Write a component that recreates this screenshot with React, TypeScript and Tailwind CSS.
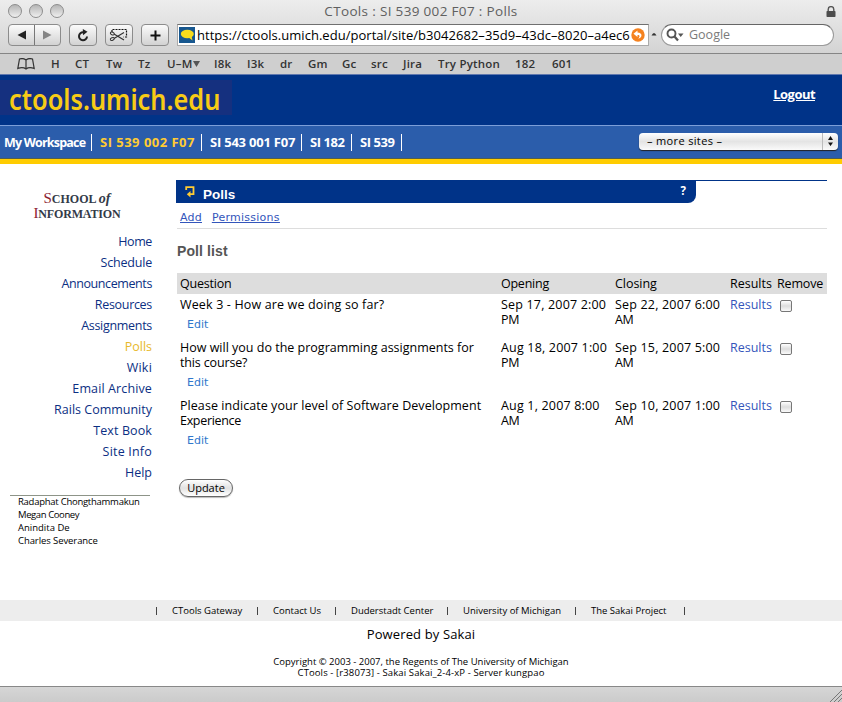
import React from "react";

const marks = [
  { label: "H", w: "w-[24px]" },
  { label: "CT", w: "w-[31px]" },
  { label: "Tw", w: "w-[32px]" },
  { label: "Tz", w: "w-[29px]" },
  { label: "U–M", w: "w-[47px]", menu: true },
  { label: "I8k", w: "w-[33px]" },
  { label: "I3k", w: "w-[33px]" },
  { label: "dr", w: "w-[28px]" },
  { label: "Gm", w: "w-[34px]" },
  { label: "Gc", w: "w-[29px]" },
  { label: "src", w: "w-[32px]" },
  { label: "Jira", w: "w-[35px]" },
  { label: "Try Python", w: "w-[77px]" },
  { label: "182", w: "w-[37px]" },
  { label: "601", w: "w-[30px]" },
];

const sites = [
  { label: "My Workspace", style: "w-[92px] pl-[4px] text-[12.500px] tracking-[-0.800px]" },
  { label: "SI 539 002 F07", style: "w-[110px] pl-[8px] tracking-[0.480px] text-[#fc3]" },
  { label: "SI 543 001 F07", style: "w-[100px] pl-[8px] tracking-[-0.220px]" },
  { label: "SI 182", style: "w-[50px] pl-[8px] tracking-[-0.450px]" },
  { label: "SI 539", style: "w-[50px] pl-[8px] tracking-[-0.450px]" },
];

const tools = [
  { label: "Home", style: "tracking-[-0.400px]" },
  { label: "Schedule", style: "tracking-[-0.200px]" },
  { label: "Announcements", style: "tracking-[-0.400px]" },
  { label: "Resources", style: "tracking-[-0.300px]" },
  { label: "Assignments", style: "tracking-[-0.300px]" },
  { label: "Polls", style: "text-[#e8b92c]" },
  { label: "Wiki", style: "tracking-[0.200px]" },
  { label: "Email Archive", style: "tracking-[0.120px]" },
  { label: "Rails Community", style: "" },
  { label: "Text Book", style: "tracking-[0.100px]" },
  { label: "Site Info", style: "tracking-[0.200px]" },
  { label: "Help", style: "" },
];

const people = [
  { label: "Radaphat Chongthammakun", style: "tracking-[-0.260px]" },
  { label: "Megan Cooney", style: "tracking-[-0.400px]" },
  { label: "Anindita De", style: "" },
  { label: "Charles Severance", style: "tracking-[-0.080px]" },
];

const headings = [
  { label: "Question", style: "tracking-[-0.200px]" },
  { label: "Opening", style: "tracking-[-0.250px]" },
  { label: "Closing", style: "tracking-[-0.050px]" },
  { label: "Results", style: "" },
  { label: "Remove", style: "tracking-[-0.150px]" },
];

type Line = { text: string; style: string };
const date = "tracking-[0.180px]";
const meridiem = "tracking-[-0.300px]";

const polls: { question: Line[]; opening: Line[]; closing: Line[] }[] = [
  {
    question: [{ text: "Week 3 - How are we doing so far?", style: "tracking-[0.150px]" }],
    opening: [{ text: "Sep 17, 2007 2:00", style: date }, { text: "PM", style: meridiem }],
    closing: [{ text: "Sep 22, 2007 6:00", style: date }, { text: "AM", style: meridiem }],
  },
  {
    question: [
      { text: "How will you do the programming assignments for", style: "" },
      { text: "this course?", style: "tracking-[-0.150px]" },
    ],
    opening: [{ text: "Aug 18, 2007 1:00", style: date }, { text: "PM", style: meridiem }],
    closing: [{ text: "Sep 15, 2007 5:00", style: date }, { text: "AM", style: meridiem }],
  },
  {
    question: [
      { text: "Please indicate your level of Software Development", style: "tracking-[0.060px]" },
      { text: "Experience", style: "tracking-[-0.320px]" },
    ],
    opening: [{ text: "Aug 1, 2007 8:00", style: date }, { text: "AM", style: meridiem }],
    closing: [{ text: "Sep 10, 2007 1:00", style: date }, { text: "AM", style: meridiem }],
  },
];

const footerLinks = [
  { label: "CTools Gateway", w: "w-[101px]" },
  { label: "Contact Us", w: "w-[78px]" },
  { label: "Duderstadt Center", w: "w-[112px]" },
  { label: "University of Michigan", w: "w-[128px]" },
  { label: "The Sakai Project", w: "w-[109px]" },
];

const btn =
  "flex h-[22px] items-center justify-center rounded-[4px] border border-[#8c8c8c] bg-linear-to-b from-[#fbfbfb] to-[#d2d2d2]";
const columns = "grid grid-cols-[321px_114px_115px_47px_53px]";

function Lines({ lines }: { lines: Line[] }) {
  return (
    <div className="pl-[3px]">
      {lines.map((line) => (
        <div key={line.text} className={`whitespace-nowrap ${line.style}`}>{line.text}</div>
      ))}
    </div>
  );
}

function BrowserChrome() {
  return (
    <div className="h-[75px] bg-linear-to-b from-[#ededed] to-[#c9c9c9] font-['Open_Sans',sans-serif]">
      <div className="grid h-[24px] grid-cols-[80px_1fr_80px] items-start">
        <div className="flex gap-[7px] pt-[4px] pl-[8px]">
          {[0, 1, 2].map((i) => (
            <span key={i} className="size-[14px] rounded-full border border-[#8d8d8d] bg-linear-to-b from-[#b5b5b5] to-[#efefef]" />
          ))}
        </div>
        <div className="text-center text-[13.500px] leading-[23px] tracking-[0.330px] text-[#606060]">CTools : SI 539 002 F07 : Polls</div>
        <svg className="mt-[6px] mr-[6px] justify-self-end" width="10" height="12" viewBox="0 0 10 12">
          <path d="M2.2 6V3.4a2.8 2.8 0 0 1 5.6 0V6" fill="none" stroke="#555" strokeWidth="1.4" />
          <rect x="0.5" y="5" width="9" height="6" rx="0.8" fill="#4c4c4c" />
        </svg>
      </div>
      <div className="flex h-[29px] items-start pl-[8px]">
        <div className={`${btn} w-[53px]`}>
          <div className="flex h-full w-[26px] items-center justify-center border-r border-[#777]">
            <svg width="9" height="10" viewBox="0 0 9 10"><path d="M9 0.5v9L0.5 5z" fill="#222" /></svg>
          </div>
          <div className="flex flex-1 items-center justify-center">
            <svg width="9" height="10" viewBox="0 0 9 10"><path d="M0 0.5v9L8.500 5z" fill="#858585" /></svg>
          </div>
        </div>
        <div className={`${btn} ml-[8px] w-[28px]`}>
          <svg width="12" height="13" viewBox="0 0 12 13">
            <path d="M10 7.500A4 4 0 1 1 6.300 3.300" fill="none" stroke="#222" strokeWidth="2" />
            <path d="M5.800 0L10.500 2.800L6 6.200z" fill="#222" />
          </svg>
        </div>
        <div className={`${btn} ml-[8px] w-[28px]`}>
          <svg width="20" height="14" viewBox="0 0 20 14" fill="none" stroke="#333">
            <path d="M3 4V1.500H17.500V9H14.500" stroke="#111" strokeWidth="1.200" strokeDasharray="2 1" />
            <path d="M5 10.400L15 4.500M5 6L15 12" strokeWidth="1.200" />
            <ellipse cx="3.300" cy="5.500" rx="2.100" ry="1.300" transform="rotate(25 3.300 5.500)" />
            <ellipse cx="3.300" cy="11" rx="2.100" ry="1.300" transform="rotate(-25 3.300 11)" />
          </svg>
        </div>
        <div className={`${btn} ml-[8px] w-[28px]`}>
          <svg width="11" height="11" viewBox="0 0 11 11"><path d="M5.500 0.500v10M0.500 5.500h10" stroke="#111" strokeWidth="2" /></svg>
        </div>
        <div className="ml-[8px] flex h-[22px] w-[472px] items-center border border-[#aaa] border-t-[#707070] bg-white pl-[1px]">
          <svg width="16" height="16" viewBox="0 0 16 16">
            <rect width="16" height="16" fill="#17578f" />
            <ellipse cx="8.300" cy="7" rx="6.500" ry="4.200" fill="#f8dc1c" />
            <path d="M9 10L13.500 13.500L12.500 9z" fill="#f8dc1c" />
          </svg>
          <span className="ml-[2px] w-[434px] text-[13px] leading-[18px] tracking-[0.035px] whitespace-nowrap text-black">https://ctools.umich.edu/portal/site/b3042682–35d9–43dc–8020–a4ec6</span>
          <svg className="shrink-0" width="14" height="14" viewBox="0 0 14 14">
            <circle cx="7" cy="7" r="6.700" fill="#f5821f" />
            <path d="M6.500 2.500L2.500 5.800L6.500 9V7C9 6.700 9.200 8.800 7 10.800C11.500 10 12 4.700 6.500 4.500z" fill="#fff" />
          </svg>
        </div>
        <svg className="mt-[8px] ml-[2px]" width="6" height="5" viewBox="0 0 6 5"><path d="M0.500 3.500Q3 -1.500 5.500 3.500z" fill="#333" /></svg>
        <div className="ml-[4px] flex h-[22px] w-[173px] items-center rounded-full border border-[#9a9a9a] border-t-[#666] bg-white pl-[4px]">
          <svg width="18" height="14" viewBox="0 0 18 14">
            <circle cx="5.500" cy="5.500" r="4" fill="none" stroke="#555" strokeWidth="1.900" />
            <path d="M8.500 8.500L12 12.500" stroke="#555" strokeWidth="2.300" />
            <path d="M12 5.500h5.500L14.700 9z" fill="#555" />
          </svg>
          <span className="mt-px ml-[5px] text-[12.500px] text-[#7b7b7b]">Google</span>
        </div>
      </div>
      <div className="flex h-[22px] items-center border-t border-b border-t-[#858585] border-b-[#6078ae] bg-[#cfcfcf] pl-[17px] text-[11.500px] font-semibold text-[#333]">
        <svg className="mr-[16px]" width="18" height="12" viewBox="0 0 18 12" fill="none" stroke="#333" strokeWidth="1.200">
          <path d="M9 2C7 0.300 4.500 0.300 2.500 1L0.800 10.500C3.500 9.500 7 9.500 9 11C11 9.500 14.500 9.500 17.200 10.500L15.500 1C13.500 0.300 11 0.300 9 2zM9 2V11" />
        </svg>
        {marks.map((m) => (
          <div key={m.label} className={`${m.w} flex shrink-0 items-center whitespace-nowrap tracking-[0.200px]`}>
            {m.label}
            {m.menu && <svg width="7" height="6" viewBox="0 0 7 6"><path d="M0 0h7L3.500 6z" fill="#555" /></svg>}
          </div>
        ))}
      </div>
    </div>
  );
}

function SiteHeader() {
  return (
    <header className="text-white">
      <div className="flex h-[50px] items-start justify-between bg-[#003388]">
        <div className="mt-[5px] h-[35px] w-[232px] bg-[#15307f] pl-[9px]">
          <div className="origin-left scale-x-[0.905] font-['Noto_Sans',sans-serif] text-[28px] leading-[38px] font-semibold whitespace-nowrap text-[#f7cb16]">ctools.umich.edu</div>
        </div>
        <a className="mt-[9px] mr-[27px] text-[13px] leading-[20px] font-bold tracking-[-0.550px] underline">Logout</a>
      </div>
      <nav className="flex h-[34px] items-center justify-between border-t border-b border-t-[#7c9ed8] border-b-[#4f5f50] bg-[#2b5dab] text-[13px] font-bold">
        <div className="flex">
          {sites.map((s) => (
            <div key={s.label} className={`flex h-[17px] items-center border-r border-white pt-[2px] whitespace-nowrap ${s.style}`}>
              {s.label}
            </div>
          ))}
        </div>
        <div className="mr-[4px] mb-[2px] flex h-[17px] w-[199px] items-center rounded-[4px] bg-linear-to-b from-white via-[#e4e4e4] to-[#fafafa] pl-[8px] text-[11px] font-normal text-black shadow-[0_1px_1px_#222]">
          <span className="flex-1 tracking-[0.350px]">– more sites –</span>
          <span className="flex h-full w-[16px] items-center justify-center border-l border-[#bbb]">
            <svg width="5" height="10" viewBox="0 0 5 10"><path d="M0 4L2.500 0L5 4zM0 6.500h5L2.500 10z" fill="#111" /></svg>
          </span>
        </div>
      </nav>
      <div className="h-[5px] bg-[#fc0]" />
    </header>
  );
}

function Sidebar() {
  return (
    <aside className="w-[176px] text-[12.500px] text-[#0b2f83]">
      <div className="mt-[27px] ml-[32px] h-[40px] w-[90px] text-center font-['Liberation_Serif',serif] text-[12px] leading-[14px] font-bold text-[#333a48]">
        <div className="whitespace-nowrap"><span className="text-[15px] font-normal text-[#8c2230]">S</span>CHOOL <i className="text-[14px]">of</i></div>
        <div className="whitespace-nowrap tracking-[-0.150px]"><span className="text-[15px] font-normal text-[#8c2230]">I</span>NFORMATION</div>
      </div>
      <ul className="mr-[24px] text-right leading-[21px]">
        {tools.map((t) => (
          <li key={t.label} className={t.style}>{t.label}</li>
        ))}
      </ul>
      <div className="mt-[12px] ml-[10px] w-[140px] border-t border-[#8d9488] pl-[8px] text-[9.500px] leading-[13px] whitespace-nowrap text-black">
        <div className="-mt-px">
          {people.map((p) => <div key={p.label} className={p.style}>{p.label}</div>)}
        </div>
      </div>
    </aside>
  );
}

function PollsTool() {
  return (
    <main className="w-[651px] pt-[16px] text-[12.500px] leading-[15px] text-black">
      <div className="h-[23px] border-t border-[#003388]">
        <div className="flex h-[22px] w-[520px] items-center justify-between rounded-br-[8px] bg-[#003388] pr-[10px] pl-[9px] font-bold text-white">
          <div className="flex items-center">
            <svg width="10" height="12" viewBox="0 0 10 12">
              <path d="M1.200 4V1.200H8.500V8.200H4" fill="none" stroke="#fc3" strokeWidth="1.800" />
              <path d="M5.500 5V11.500L1.800 8.200z" fill="#fc3" />
            </svg>
            <span className="mt-[4px] ml-[8px] font-['Liberation_Sans',sans-serif] text-[13.500px]">Polls</span>
          </div>
          <span className="mb-[3px] text-[11.500px]">?</span>
        </div>
      </div>
      <div className="ml-[1px] flex h-[26px] gap-[10px] border-b border-[#ddd] pt-[7px] pl-[3px] font-['DejaVu_Sans',sans-serif] text-[11px] leading-[15px] text-[#3355bb] underline">
        <a className="tracking-[0.200px]">Add</a>
        <a className="tracking-[0.250px]">Permissions</a>
      </div>
      <h3 className="mt-[14px] ml-[1px] h-[30px] font-['Liberation_Sans',sans-serif] text-[14px] leading-[17px] font-bold tracking-[0.100px] text-[#555]">Poll list</h3>
      <div className={`${columns} ml-[1px] h-[21px] items-center bg-[#ddd]`}>
        {headings.map((h) => <div key={h.label} className={`pl-[3px] ${h.style}`}>{h.label}</div>)}
      </div>
      {polls.map((p) => (
        <div key={p.closing[0].text} className={`${columns} ml-[1px] pt-[3px] pb-[5px]`}>
          <div>
            <Lines lines={p.question} />
            <div className="mt-[5px] pl-[10px] font-['DejaVu_Sans',sans-serif] text-[11px] text-[#3077cc]">Edit</div>
          </div>
          <Lines lines={p.opening} />
          <Lines lines={p.closing} />
          <div className="pl-[3px] text-[#3355bb]">Results</div>
          <div className="mt-[3px] ml-[6px] size-[12px] rounded-[2px] border border-[#777] bg-linear-to-b from-[#fff] via-[#ddd] to-[#fafafa]" />
        </div>
      ))}
      <button className="mt-[26px] ml-[3px] flex h-[18px] w-[54px] items-center justify-center rounded-full border border-[#666] bg-linear-to-b from-white via-[#e2e2e2] to-white pb-px text-[11px] shadow-[0_1px_1px_#bbb]">Update</button>
    </main>
  );
}

export default function App() {
  return (
    <div className="h-[702px] w-[842px] overflow-hidden bg-white font-['Open_Sans',sans-serif]">
      <BrowserChrome />
      <SiteHeader />
      <div className="flex h-[436px]">
        <Sidebar />
        <PollsTool />
      </div>
      <footer className="h-[86px] text-center text-[9.500px] text-black">
        <div className="flex h-[21px] items-center bg-[#ededed] pt-px pl-[156px]">
          {footerLinks.map((l) => (
            <div key={l.label} className={`${l.w} flex items-center whitespace-nowrap`}>
              <span className="mr-[15px] h-[8px] w-px bg-[#444]" />
              {l.label}
            </div>
          ))}
          <span className="h-[8px] w-px bg-[#444]" />
        </div>
        <div className="mt-[5px] text-[13px] leading-[16px] tracking-[0.130px]">Powered by Sakai</div>
        <div className="mt-[14px] leading-[11px]">
          <div>Copyright © 2003 - 2007, the Regents of The University of Michigan</div>
          <div className="tracking-[0.110px]">CTools - [r38073] - Sakai Sakai_2-4-xP - Server kungpao</div>
        </div>
      </footer>
      <div className="flex h-[16px] items-end justify-end border-t border-[#888] bg-linear-to-b from-[#d6d6d6] to-[#cbcbcb]">
        <svg width="13" height="13" viewBox="0 0 13 13" stroke="#777"><path d="M1 13L13 1M5 13L13 5M9 13L13 9" /></svg>
      </div>
    </div>
  );
}
